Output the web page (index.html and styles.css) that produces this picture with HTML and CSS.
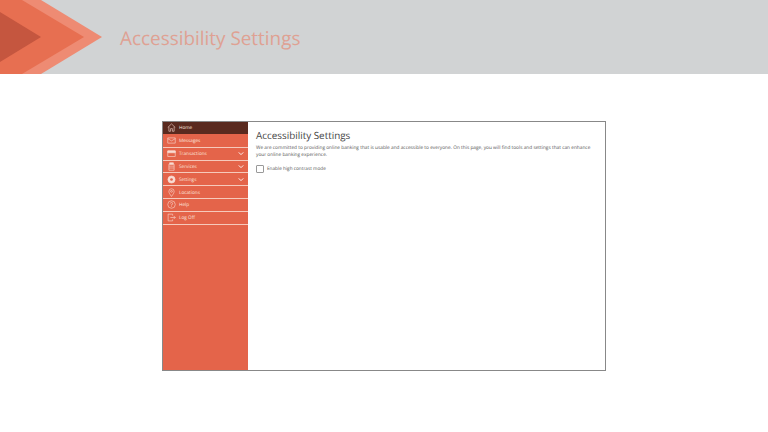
FILE: index.html
```html
<!DOCTYPE html>
<html lang="en">
<head>
<meta charset="UTF-8">
<title>Accessibility Settings</title>
<link rel="stylesheet" href="styles.css">
</head>
<body>
    <div class="banner">
        <svg class="banner-art" width="102" height="74" viewBox="0 0 102 74">
            <polygon points="0,0 41,0 102,37 41,74 0,74" fill="#ee8b73"/>
            <polygon points="0,0 22,0 84,37 22,74 0,74" fill="#e76f51"/>
            <polygon points="0,12 41,37 0,62" fill="#c5563f"/>
        </svg>
        <div class="banner-title">Accessibility Settings</div>
    </div>
    <div class="frame">
        <div class="sidebar">
            <div class="nav-row active">
                <svg class="nav-icon" viewBox="0 0 12 12"><path d="M1 6 L6 1.2 L11 6 M2.5 5 V11 H4.8 V7.5 H7.2 V11 H9.5 V5"/></svg>
                <span class="nav-label">Home</span>
            </div>
            <div class="nav-row">
                <svg class="nav-icon" viewBox="0 0 12 12"><path d="M1 2.5 H11 V9.5 H1 Z M1 3.5 L6 6.5 L11 3.5"/></svg>
                <span class="nav-label">Messages</span>
            </div>
            <div class="nav-row">
                <svg class="nav-icon" viewBox="0 0 12 12"><path d="M1 2.5 H11 V10 H1 Z"/><path class="solid" d="M1 2.5 H11 V5 H1 Z"/></svg>
                <span class="nav-label">Transactions</span>
                <svg class="nav-arrow" viewBox="0 0 8 6"><path d="M1 1.5 L4 4.5 L7 1.5"/></svg>
            </div>
            <div class="nav-row">
                <svg class="nav-icon" viewBox="0 0 12 12"><path d="M2.5 3 H9.5 V11 H2.5 Z M2.5 5.5 H9.5 M2.5 8 H9.5"/><path class="solid" d="M3.5 1 H8.5 V3 H3.5 Z"/></svg>
                <span class="nav-label">Services</span>
                <svg class="nav-arrow" viewBox="0 0 8 6"><path d="M1 1.5 L4 4.5 L7 1.5"/></svg>
            </div>
            <div class="nav-row">
                <svg class="nav-icon" viewBox="0 0 12 12"><circle class="solid" cx="6" cy="6" r="4.8"/><circle class="hole" cx="6" cy="6" r="1.8"/></svg>
                <span class="nav-label">Settings</span>
                <svg class="nav-arrow" viewBox="0 0 8 6"><path d="M1 1.5 L4 4.5 L7 1.5"/></svg>
            </div>
            <div class="nav-row">
                <svg class="nav-icon" viewBox="0 0 12 12"><path d="M6 11.3 C4 8.3 2.5 6.6 2.5 4.5 A3.5 3.5 0 0 1 9.5 4.5 C9.5 6.6 8 8.3 6 11.3 Z"/><circle cx="6" cy="4.5" r="1.2"/></svg>
                <span class="nav-label">Locations</span>
            </div>
            <div class="nav-row">
                <svg class="nav-icon" viewBox="0 0 12 12"><circle cx="6" cy="6" r="5"/><path d="M4.5 4.7 A1.5 1.5 0 1 1 6 6.3 V7.3 M6 8.3 V9.2"/></svg>
                <span class="nav-label">Help</span>
            </div>
            <div class="nav-row">
                <svg class="nav-icon" viewBox="0 0 12 12"><path d="M7.5 3.5 V1.5 H1.5 V10.5 H7.5 V8.5 M4.5 6 H11 M9 4 L11 6 L9 8"/></svg>
                <span class="nav-label">Log Off</span>
            </div>
        </div>
        <div class="content">
            <h1 class="content-title">Accessibility Settings</h1>
            <p class="content-text">We are committed to providing online banking that is usable and accessible to everyone. On this page, you will find tools and settings that can enhance your online banking experience.</p>
            <label class="check-row">
                <span class="check-box"></span>
                <span class="check-text">Enable high contrast mode</span>
            </label>
        </div>
    </div>
</body>
</html>
```

FILE: styles.css
```css
body {
    margin: 0;
    background-color: #fff;
    font-family: "Open Sans", sans-serif;
    color: #555;
    text-rendering: geometricPrecision;
}
.banner {
    height: 74px;
    background-color: #d1d3d4;
    display: flex;
    align-items: center;
}
.banner-art {
    display: block;
    flex-shrink: 0;
}
.banner-title {
    margin-left: 18px;
    padding-top: 2px;
    font-size: 18.9px;
    color: #dfa193;
}
.frame {
    width: 442px;
    height: 248px;
    margin: 47px auto 0;
    border: 1px solid #888;
    display: flex;
}
.sidebar {
    width: 85px;
    background-color: #e4644a;
    flex-shrink: 0;
}
.nav-row {
    height: 11.85px;
    padding-left: 4px;
    border-bottom: 1px solid #f6c9bb;
    display: flex;
    align-items: center;
    color: #fbe6df;
    font-size: 4.7px;
}
.nav-row.active {
    background-color: #5a2a1f;
    border-bottom-color: #e4644a;
}
.nav-icon {
    width: 9px;
    height: 9px;
    fill: none;
    stroke: #f9dcd3;
    stroke-width: 0.8;
    flex-shrink: 0;
}
.nav-icon .solid {
    fill: #f9dcd3;
}
.nav-icon .hole {
    fill: #e4644a;
    stroke: none;
}
.nav-label {
    margin-left: 3px;
    padding-top: 1px;
}
.nav-arrow {
    width: 6px;
    height: 5px;
    margin-left: auto;
    margin-right: 4px;
    fill: none;
    stroke: #fff;
    stroke-width: 1.2;
}
.content {
    padding: 6px 8px 0 8px;
    flex: 1;
}
.content-title {
    margin: 0;
    font-size: 9.9px;
    font-weight: 400;
    line-height: 14px;
    color: #444;
}
.content-text {
    margin: 3px 0 0;
    font-size: 4.78px;
    line-height: 7.2px;
}
.check-row {
    margin-top: 6px;
    display: flex;
    align-items: center;
}
.check-box {
    width: 6px;
    height: 6px;
    border: 1px solid #999;
    border-radius: 1px;
}
.check-text {
    margin-left: 3px;
    font-size: 4.72px;
}
```
